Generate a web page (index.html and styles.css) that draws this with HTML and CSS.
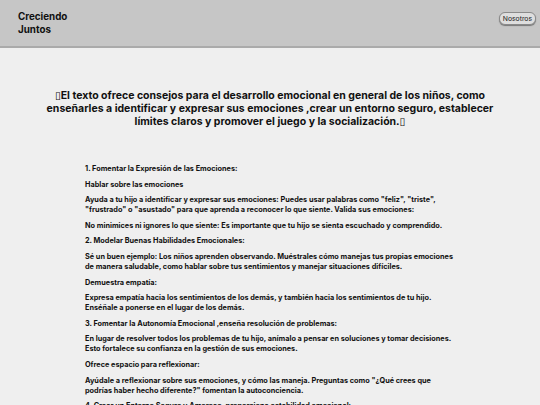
FILE: index.html
```html
<!DOCTYPE html>
<html lang="es">
<head>
<meta charset="utf-8">
<link rel="stylesheet" href="styles.css">
</head>
<body>
<header class="topbar">
  <div class="brand">Creciendo Juntos</div>
  <button class="nav-btn">Nosotros</button>
</header>
<main class="page">
  <h1 class="intro">▯El texto ofrece consejos para el desarrollo emocional en general de los niños, como enseñarles a identificar y expresar sus emociones ,crear un entorno seguro, establecer límites claros y promover el juego y la socialización.▯</h1>
  <section class="content">
    <p>1. Fomentar la Expresión de las Emociones:</p>
    <p>Hablar sobre las emociones</p>
    <p>Ayuda a tu hijo a identificar y expresar sus emociones: Puedes usar palabras como "feliz", "triste", "frustrado" o "asustado" para que aprenda a reconocer lo que siente. Valida sus emociones:</p>
    <p>No minimices ni ignores lo que siente: Es importante que tu hijo se sienta escuchado y comprendido.</p>
    <p>2. Modelar Buenas Habilidades Emocionales:</p>
    <p>Sé un buen ejemplo: Los niños aprenden observando. Muéstrales cómo manejas tus propias emociones de manera saludable, como hablar sobre tus sentimientos y manejar situaciones difíciles.</p>
    <p>Demuestra empatía:</p>
    <p>Expresa empatía hacia los sentimientos de los demás, y también hacia los sentimientos de tu hijo. Enséñale a ponerse en el lugar de los demás.</p>
    <p>3. Fomentar la Autonomía Emocional ,enseña resolución de problemas:</p>
    <p>En lugar de resolver todos los problemas de tu hijo, anímalo a pensar en soluciones y tomar decisiones. Esto fortalece su confianza en la gestión de sus emociones.</p>
    <p>Ofrece espacio para reflexionar:</p>
    <p>Ayúdale a reflexionar sobre sus emociones, y cómo las maneja. Preguntas como "¿Qué crees que podrías haber hecho diferente?" fomentan la autoconciencia.</p>
    <p>4. Crear un Entorno Seguro y Amoroso, proporciona estabilidad emocional:</p>
    <p>Establece rutinas y límites claros que le den seguridad a tu hijo.</p>
  </section>
</main>
</body>
</html>
```
FILE: styles.css
```css
html, body {
  margin: 0;
  padding: 0;
}
body {
  background: #efefef;
  font-family: Inter, "DejaVu Sans", sans-serif;
  color: #111;
  overflow: hidden;
  height: 405px;
}
.topbar {
  height: 46px;
  background: #c6c6c6;
  border-bottom: 2px solid #aaaaaa;
  display: flex;
  justify-content: space-between;
  align-items: flex-start;
  padding: 0 4px 0 18px;
}
.brand {
  width: 60px;
  margin-top: 11px;
  font-weight: 700;
  font-size: 9.8px;
  line-height: 12.5px;
}
.nav-btn {
  margin-top: 12px;
  font-family: Inter, "DejaVu Sans", sans-serif;
  font-size: 6.8px;
  padding: 1px 3px;
  background: #dedede;
  border: 1px solid #8a8a8a;
  border-radius: 6px;
  box-shadow: 0 1px 1px #777;
  color: #222;
}
.page {
  padding-top: 41px;
}
.intro {
  margin: 0 auto;
  width: 460px;
  text-align: center;
  font-size: 10.5px;
  line-height: 13px;
  font-weight: 700;
}
.content {
  width: 370px;
  margin: 36px auto 0;
}
.content p {
  margin: 0 0 5.6px;
  font-size: 7.3px;
  line-height: 10px;
  font-weight: 700;
}
```
